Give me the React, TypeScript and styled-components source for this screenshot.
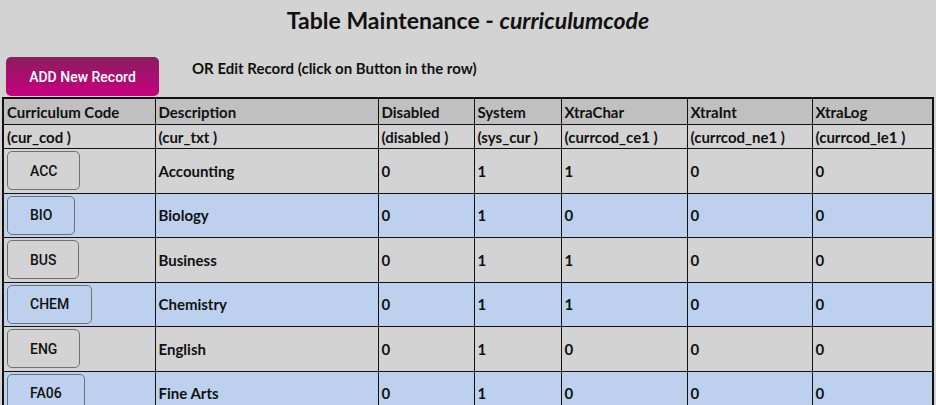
import styled, { createGlobalStyle } from "styled-components";

const GlobalStyle = createGlobalStyle`
  html, body {
    margin: 0;
    padding: 0;
    background: #d3d3d3;
  }
  body {
    font-family: Lato, "Noto Sans", sans-serif;
    color: #111;
  }
`;

type Row = {
  code: string;
  desc: string;
  disabled: number;
  system: number;
  xchar: number;
  xint: number;
  xlog: number;
};

const rows: Row[] = [
  { code: "ACC", desc: "Accounting", disabled: 0, system: 1, xchar: 1, xint: 0, xlog: 0 },
  { code: "BIO", desc: "Biology", disabled: 0, system: 1, xchar: 0, xint: 0, xlog: 0 },
  { code: "BUS", desc: "Business", disabled: 0, system: 1, xchar: 1, xint: 0, xlog: 0 },
  { code: "CHEM", desc: "Chemistry", disabled: 0, system: 1, xchar: 1, xint: 0, xlog: 0 },
  { code: "ENG", desc: "English", disabled: 0, system: 1, xchar: 0, xint: 0, xlog: 0 },
  { code: "FA06", desc: "Fine Arts", disabled: 0, system: 1, xchar: 0, xint: 0, xlog: 0 },
];

const columns = [
  { title: "Curriculum Code", field: "(cur_cod )", width: 152 },
  { title: "Description", field: "(cur_txt )", width: 223 },
  { title: "Disabled", field: "(disabled )", width: 96 },
  { title: "System", field: "(sys_cur )", width: 87 },
  { title: "XtraChar", field: "(currcod_ce1 )", width: 126 },
  { title: "XtraInt", field: "(currcod_ne1 )", width: 125 },
  { title: "XtraLog", field: "(currcod_le1 )", width: 121 },
];

export default function App() {
  return (
    <Page>
      <GlobalStyle />
      <Title>
        Table Maintenance - <em>curriculumcode</em>
      </Title>
      <Toolbar>
        <AddButton>ADD New Record</AddButton>
        <Hint>OR Edit Record (click on Button in the row)</Hint>
      </Toolbar>
      <Table>
        <colgroup>
          {columns.map((c) => (
            <col key={c.title} style={{ width: c.width }} />
          ))}
        </colgroup>
        <thead>
          <HeadRow>
            {columns.map((c) => (
              <th key={c.title}>{c.title}</th>
            ))}
          </HeadRow>
          <FieldRow>
            {columns.map((c) => (
              <td key={c.field}>{c.field}</td>
            ))}
          </FieldRow>
        </thead>
        <tbody>
          {rows.map((r, i) => (
            <DataRow key={r.code} alt={i % 2 === 1}>
              <td>
                <CodeButton>{r.code}</CodeButton>
              </td>
              <td>{r.desc}</td>
              <td>{r.disabled}</td>
              <td>{r.system}</td>
              <td>{r.xchar}</td>
              <td>{r.xint}</td>
              <td>{r.xlog}</td>
            </DataRow>
          ))}
        </tbody>
      </Table>
    </Page>
  );
}

const Page = styled.div`
  width: 936px;
  height: 405px;
  overflow: hidden;
`;

const Title = styled.h1`
  margin: 0;
  padding-top: 6px;
  height: 30px;
  text-align: center;
  font-size: 23px;
  font-weight: 700;
  line-height: 28px;
  color: #111;
  em {
    font-style: italic;
  }
`;

const Toolbar = styled.div`
  display: flex;
  align-items: flex-start;
  gap: 33px;
  padding: 21px 0 0 6px;
  height: 40px;
`;

const AddButton = styled.button`
  width: 153px;
  height: 39px;
  border: none;
  border-radius: 5px;
  background: linear-gradient(to bottom, #8a1d5f, #c8007f);
  color: #fff;
  font-family: Roboto, "Liberation Sans", sans-serif;
  font-size: 14px;
  font-weight: 500;
  cursor: pointer;
`;

const Hint = styled.p`
  margin: 2px 0 0;
  font-size: 15px;
  font-weight: 700;
  line-height: 18px;
`;

const Table = styled.table`
  margin-left: 2px;
  width: 932px;
  border-collapse: collapse;
  border: 2px solid #111;
  table-layout: fixed;
  font-size: 15px;
  font-weight: 700;

  th,
  td {
    border: 1px solid #111;
    padding: 0 2px 0 3px;
    text-align: left;
    white-space: nowrap;
    overflow: hidden;
  }
`;

const HeadRow = styled.tr`
  background: #c0c0c0;
  th {
    height: 25px;
    font-weight: 700;
  }
`;

const FieldRow = styled.tr`
  background: #d3d3d3;
  td {
    height: 23px;
  }
`;

const DataRow = styled.tr<{ alt: boolean }>`
  background: ${(p) => (p.alt ? "#bdd1ee" : "#d3d3d3")};
  td {
    height: 43.5px;
  }
`;

const CodeButton = styled.button`
  height: 39px;
  padding: 0 22px;
  border: 1px solid #707070;
  border-radius: 5px;
  background: transparent;
  color: #111;
  font-family: Roboto, "Liberation Sans", sans-serif;
  font-size: 14px;
  font-weight: 500;
  cursor: pointer;
`;
